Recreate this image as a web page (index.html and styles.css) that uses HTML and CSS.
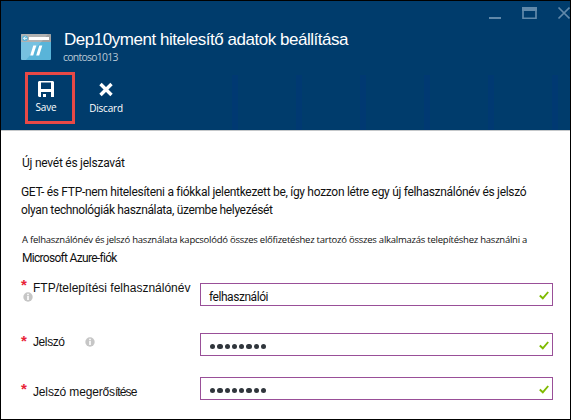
FILE: index.html
```html
<!DOCTYPE html>
<html lang="hu">
<head>
<meta charset="utf-8">
<title>Hitelesítő adatok</title>
<link rel="stylesheet" href="styles.css">
</head>
<body>
<main class="blade">
  <header class="header">
    <div class="window-controls">
      <svg width="82" height="14" viewBox="0 0 82 14" fill="none" stroke="#6189aa">
        <path d="M0 12H12" stroke-width="2"/>
        <path d="M33 3H48" stroke-width="4"/>
        <path d="M34 4V12.25H47V4" stroke-width="1.7"/>
        <path d="M69.5 1.5L80.5 12.5M80.5 1.5L69.5 12.5" stroke-width="1.7"/>
      </svg>
    </div>
    <div class="heading">
      <svg class="app-icon" width="30" height="26" viewBox="0 0 30 26">
        <rect width="30" height="26" rx="1" fill="#59b4d9"/>
        <path d="M0 8V1Q0 0 1 0H29Q30 0 30 1V8Z" fill="#a0a1a2"/>
        <path d="M0 1Q0 0 1 0H27L5 26H1Q0 26 0 25Z" fill="#fff" opacity=".18"/>
        <rect x="8" y="3" width="20" height="3" fill="#fff"/>
        <circle cx="4" cy="4.3" r="2.9" fill="#59b4d9"/>
        <path d="M6 4.3H2.6M4.3 2.5L2.5 4.3L4.3 6.1" fill="none" stroke="#fff" stroke-width=".9"/>
        <path d="M12.3 11.5H15.3L12.2 21.5H9.2ZM18.3 11.5H21.3L18.2 21.5H15.2Z" fill="#fff"/>
      </svg>
      <div class="titles">
        <h1 class="title">Dep10yment hitelesítő adatok beállítása</h1>
        <div class="subtitle">contoso1013</div>
      </div>
    </div>
    <div class="toolbar">
      <div class="command command-active">
        <svg width="16" height="17" viewBox="0 0 16 17">
          <path fill="#fff" fill-rule="evenodd" d="M1 0H15L16 1V16H13V11H3V16H1L0 15V1ZM3 1.5V8H13V1.5Z"/>
          <path fill="#fff" d="M5 13H8V16H5Z"/>
        </svg>
        <span>Save</span>
      </div>
      <div class="command">
        <svg width="16" height="17" viewBox="0 0 16 17">
          <path d="M2.5 2L13.5 13M13.5 2L2.5 13" stroke="#fff" stroke-width="3.4"/>
        </svg>
        <span>Discard</span>
      </div>
      <div class="slots"><i></i><i></i><i></i><i></i><i></i><i></i></div>
    </div>
  </header>
  <section class="content">
    <p class="intro">Új nevét és jelszavát</p>
    <p class="description"><span class="desc-a">GET- és FTP-nem hitelesíteni a fiókkal jelentkezett be, így hozzon létre egy új felhasználónév és jelszó</span><br><span class="desc-b">olyan technológiák használata, üzembe helyezését</span></p>
    <p class="note"><span class="note-a">A felhasználónév és jelszó használata kapcsolódó összes előfizetéshez tartozó összes alkalmazás telepítéshez használni a</span><br><span class="note-b">Microsoft Azure-fiók</span></p>
    <form class="form">
      <div class="row row-user">
        <span class="star">*</span>
        <div class="label label-stacked"><span>FTP/telepítési felhasználónév</span>
          <svg class="info" width="10" height="10" viewBox="0 0 10 10"><circle cx="5" cy="5" r="4.7" fill="#c6c6c6"/><path d="M4.2 1.8H5.8V3.2H4.2ZM4.2 4H5.8V8H4.2Z" fill="#fff"/></svg>
        </div>
        <div class="field"><span class="value">felhasználói</span><svg class="check" width="10" height="9" viewBox="0 0 10 9"><path d="M.8 4.5L3.8 7.3L9.2 1" fill="none" stroke="#7fba00" stroke-width="1.9"/></svg></div>
      </div>
      <div class="row row-pass">
        <span class="star">*</span>
        <div class="label"><span>Jelszó</span>
          <svg class="info" width="10" height="10" viewBox="0 0 10 10"><circle cx="5" cy="5" r="4.7" fill="#c6c6c6"/><path d="M4.2 1.8H5.8V3.2H4.2ZM4.2 4H5.8V8H4.2Z" fill="#fff"/></svg>
        </div>
        <div class="field"><span class="dots"><i></i><i></i><i></i><i></i><i></i><i></i><i></i><i></i></span><svg class="check" width="10" height="9" viewBox="0 0 10 9"><path d="M.8 4.5L3.8 7.3L9.2 1" fill="none" stroke="#7fba00" stroke-width="1.9"/></svg></div>
      </div>
      <div class="row row-confirm">
        <span class="star">*</span>
        <div class="label"><span>Jelszó megerős<span class="tight">ítése</span></span></div>
        <div class="field"><span class="dots"><i></i><i></i><i></i><i></i><i></i><i></i><i></i><i></i></span><svg class="check" width="10" height="9" viewBox="0 0 10 9"><path d="M.8 4.5L3.8 7.3L9.2 1" fill="none" stroke="#7fba00" stroke-width="1.9"/></svg></div>
      </div>
    </form>
  </section>
</main>
</body>
</html>
```

FILE: styles.css
```css
* { box-sizing: border-box; }
body { margin: 0; background: #fff; color: #111; font-family: Roboto, "Liberation Sans", sans-serif; }
svg { display: block; flex: none; }
p, h1 { margin: 0; font-weight: 400; }
.blade { width: 571px; height: 420px; border: 1px solid #000; overflow: hidden; white-space: nowrap; }
.header { height: 130px; background: #003c6c; border-bottom: 1px solid #c5c8ca; color: #fff; }
.window-controls { display: flex; justify-content: flex-end; height: 27px; padding-top: 5px; margin-right: -1px; }
.heading { display: flex; gap: 13px; padding-left: 20px; height: 44px; }
.app-icon { margin-top: 6px; }
.title { font: 17px/20px "Liberation Sans", sans-serif; margin-top: 2px; letter-spacing: -.47px; }
.subtitle { font: 10.4px/14px "Open Sans", sans-serif; color: #b8c8d5; margin-left: -1px; letter-spacing: -.65px; }
.subtitle { letter-spacing: -.7px; }
.toolbar { display: flex; height: 58px; }
.command { width: 56px; height: 52px; margin-left: 3px; padding-top: 10px; display: flex; flex-direction: column; align-items: center; font: 10px/14px "Open Sans", sans-serif; letter-spacing: -.2px; }
.command svg { margin-bottom: 2px; }
.command-active { width: 50px; margin-left: 24px; padding: 6px 8px 0 0; border: 3px solid #e84946; }
.slots { display: flex; gap: 58px; margin: 3px 0 0 98px; }
.slots i { width: 6px; height: 55px; background: #003972; }
.content { padding-left: 20px; }
.intro { font-size: 12px; line-height: 18px; padding: 23px 0 0 1px; letter-spacing: -.25px; }
.description { font-size: 12px; line-height: 18px; margin-top: 11px; }
.desc-a { letter-spacing: -.3px; }
.desc-b { letter-spacing: -.36px; }
.note { font-size: 12px; line-height: 18px; margin: 11px 0 0 1px; }
.note-a { font: 9.5px/18px "Open Sans", sans-serif; letter-spacing: -.24px; }
.note-b { letter-spacing: -.7px; }
.form { padding-top: 16px; }
.row { display: flex; height: 23px; }
.row-pass { margin-top: 27px; }
.row-confirm { margin-top: 21px; }
.star { width: 12px; margin-top: -7px; font: bold 15px/18px "Liberation Sans", sans-serif; color: #e82338; }
.row-pass .star { margin-top: -1px; }
.row-confirm .star { margin-top: 3px; }
.label { display: flex; width: 167px; font: 12px/16px "Liberation Sans", sans-serif; }
.label-stacked { display: block; margin-top: -3px; }
.label-stacked .info { margin: -4px 0 0 -10px; }
.row-pass .label { gap: 20px; padding-top: 1px; letter-spacing: -.4px; }
.row-pass .info { margin-top: 3px; }
.row-confirm .label { padding-top: 7px; letter-spacing: -.15px; }
.field { display: flex; justify-content: space-between; width: 353px; height: 23px; border: 1px solid #994f98; padding: 0 3px 0 8px; }
.value { font-size: 12px; line-height: 27px; letter-spacing: -.45px; }
.check { margin-top: 7px; }
.dots { display: flex; gap: 2px; padding: 10px 0 0 1px; }
.dots i { width: 5.3px; height: 5.3px; border-radius: 50%; background: #30363c; }
.tight { letter-spacing: -.9px; }
```
